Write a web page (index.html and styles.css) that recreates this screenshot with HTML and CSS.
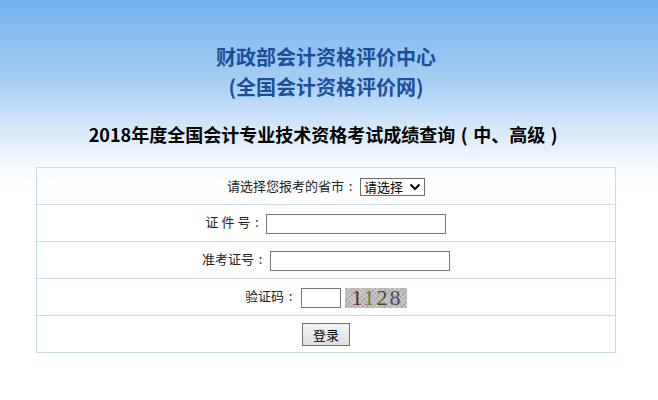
FILE: index.html
```html
<!DOCTYPE html>
<html lang="zh-CN">
<head>
<meta charset="utf-8">
<title>2018年度全国会计专业技术资格考试成绩查询</title>
<link rel="stylesheet" href="styles.css">
</head>
<body>
<div class="page">
  <div class="org">
    <div>财政部会计资格评价中心</div>
    <div>(全国会计资格评价网)</div>
  </div>
  <h2 class="title">2018年度全国会计专业技术资格考试成绩查询<span class="p">(</span>中、高级<span class="p">)</span></h2>
  <table class="form">
    <tr><td>请选择您报考的省市<span class="p">:</span><select class="sel"><option>请选择</option></select></td></tr>
    <tr><td>证 件 号<span class="p">:</span><input class="txt" type="text"></td></tr>
    <tr><td>准考证号<span class="p">:</span><input class="txt" type="text"></td></tr>
    <tr><td>验证码<span class="p">:</span><input class="code" type="text"><span class="captcha"><span class="c1">1</span><span class="c2">1</span><span class="c3">2</span><span class="c4">8</span></span></td></tr>
    <tr><td><button class="btn" type="button">登录</button></td></tr>
  </table>
</div>
</body>
</html>
```

FILE: styles.css
```css
html, body {
  margin: 0;
  padding: 0;
}
body {
  background: linear-gradient(to bottom, #73b2ee 0px, #a6cdf3 80px, #d8e9fa 130px, #f7fbff 170px, #ffffff 190px) no-repeat;
  background-color: #fff;
  height: 400px;
  font-family: "Noto Sans CJK SC", "Noto Sans", sans-serif;
  color: #222;
}
.page {
  width: 652px;
  padding-top: 42px;
}
.org {
  text-align: center;
  color: #1b4f9b;
  font-size: 20px;
  font-weight: bold;
  line-height: 30px;
}
.title {
  margin: 20px 0 0;
  text-align: center;
  font-size: 18px;
  font-weight: bold;
  line-height: 24px;
  color: #000;
}
.p {
  display: inline-block;
  width: 1em;
  text-align: center;
}
.form {
  margin: 21px auto 0;
  width: 580px;
  border-collapse: collapse;
  font-size: 13px;
}
.form td {
  border: 1px solid #c8dde7;
  height: 36px;
  padding: 0;
  text-align: center;
  vertical-align: middle;
}
.sel {
  -webkit-appearance: none;
  appearance: none;
  width: 65px;
  height: 18px;
  border: 1px solid #6e6e6e;
  border-radius: 0;
  padding: 0 0 0 3px;
  margin: 0 0 0 3px;
  font: 13px "Noto Sans CJK SC", sans-serif;
  line-height: 16px;
  color: #000;
  background: #fff url("data:image/svg+xml,%3Csvg xmlns='http://www.w3.org/2000/svg' width='12' height='8' viewBox='0 0 12 8'%3E%3Cpath d='M1.5 1.5 L6 6 L10.5 1.5' fill='none' stroke='%23000' stroke-width='2'/%3E%3C/svg%3E") no-repeat right 3px center;
  vertical-align: middle;
}
.txt {
  width: 180px;
  height: 20px;
  box-sizing: border-box;
  border: 1px solid #767676;
  padding: 0 2px;
  margin: 0 0 0 3px;
  vertical-align: middle;
  font-size: 13px;
}
.code {
  width: 40px;
  height: 20px;
  box-sizing: border-box;
  border: 1px solid #767676;
  padding: 0 2px;
  margin: 0 0 0 4px;
  vertical-align: middle;
}
.captcha {
  display: inline-block;
  width: 62px;
  height: 20px;
  margin-left: 4px;
  vertical-align: middle;
  background-color: #bdb9b6;
  background-image:
    repeating-linear-gradient(45deg, rgba(255,255,255,0.3) 0 1px, transparent 1px 3px),
    repeating-linear-gradient(-45deg, rgba(110,100,100,0.25) 0 1px, transparent 1px 4px);
  font-family: "Liberation Serif", "DejaVu Serif", serif;
  font-size: 22px;
  line-height: 20px;
  text-align: center;
  letter-spacing: 2px;
  text-indent: 2px;
}
.c1 { color: #6a1f33; }
.c2 { color: #6f7d2c; }
.c3 { color: #35582b; }
.c4 { color: #3d4d72; }
.btn {
  width: 48px;
  height: 23px;
  border: 1px solid #707070;
  border-radius: 0;
  background: linear-gradient(to bottom, #f4f4f4, #dedede);
  font: 13px "Noto Sans CJK SC", sans-serif;
  color: #000;
  padding: 0;
  vertical-align: middle;
}
```
